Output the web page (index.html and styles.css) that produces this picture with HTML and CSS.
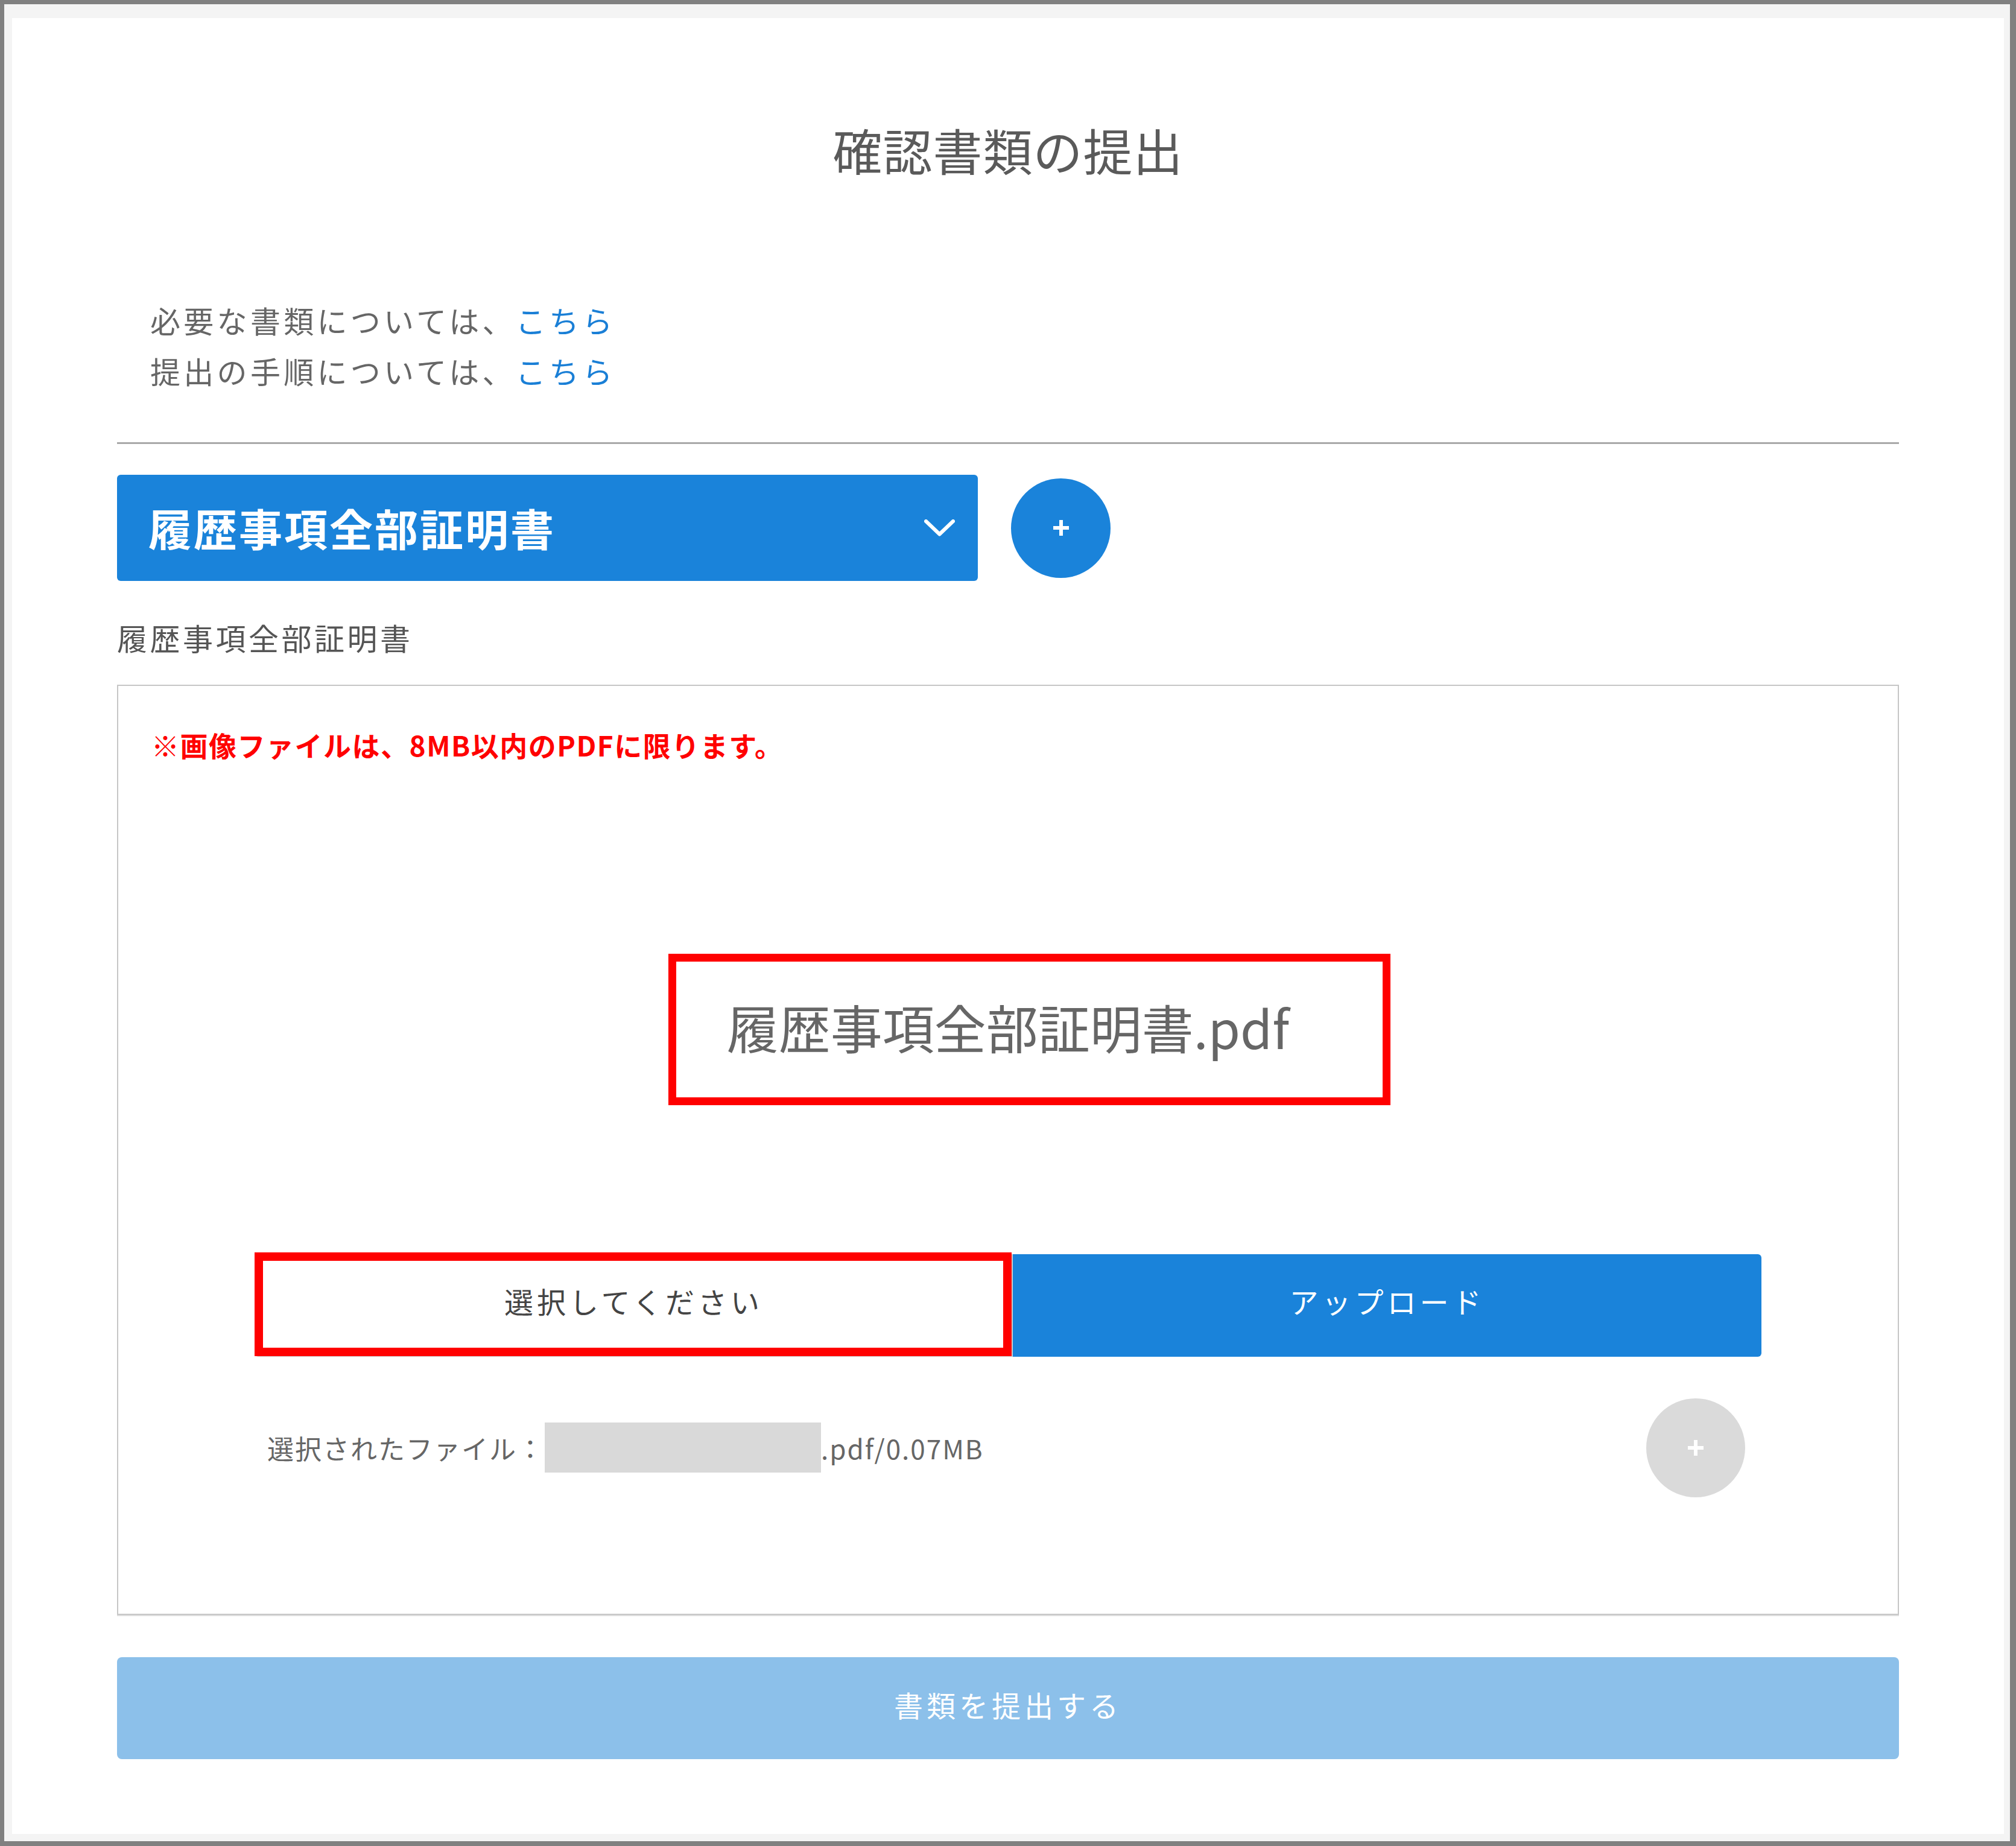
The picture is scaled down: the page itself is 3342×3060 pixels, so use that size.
FILE: index.html
```html
<!DOCTYPE html>
<html lang="ja">
<head>
    <meta charset="UTF-8">
    <meta name="viewport" content="width=device-width, initial-scale=1.0">
    <title>確認書類の提出</title>
    <link rel="stylesheet" href="styles.css">
</head>
<body>
    <div class="frame">
        <main class="page">
            <h1 class="title">確認書類の提出</h1>

            <div class="guide">
                <p>必要な書類については、<a href="#">こちら</a></p>
                <p>提出の手順については、<a href="#">こちら</a></p>
            </div>

            <hr class="divider">

            <div class="doc-row">
                <div class="doc-select">
                    <span>履歴事項全部証明書</span>
                    <svg class="chevron" width="51" height="28" viewBox="0 0 51 28">
                        <polyline points="3,3 25.5,24.5 48,3" fill="none" stroke="#fff" stroke-width="6" stroke-linecap="round" stroke-linejoin="round"/>
                    </svg>
                </div>
                <button class="add-btn" type="button">
                    <svg width="32" height="30" viewBox="0 0 32 30">
                        <path d="M16 2v26M3 15h26" stroke="#fff" stroke-width="6"/>
                    </svg>
                </button>
            </div>

            <p class="doc-label">履歴事項全部証明書</p>

            <section class="upload-box">
                <p class="note">※画像ファイルは、8MB以内のPDFに限ります。</p>

                <div class="file-name">
                    <span class="file-name-text">履歴事項全部証明書.pdf<span class="mark mark--file"></span></span>
                </div>

                <div class="actions">
                    <button class="pick" type="button">選択してください<span class="mark mark--pick"></span></button>
                    <button class="upload" type="button">アップロード</button>
                </div>

                <div class="picked">
                    <span>選択されたファイル：</span><span class="masked"></span><span>.pdf/0.07MB</span>
                    <button class="add-btn add-btn--off" type="button">
                        <svg width="32" height="30" viewBox="0 0 32 30">
                            <path d="M16 2v26M3 15h26" stroke="#fff" stroke-width="6"/>
                        </svg>
                    </button>
                </div>
            </section>

            <button class="submit" type="button">書類を提出する</button>
        </main>
    </div>
</body>
</html>
```

FILE: styles.css
```css
* {
    box-sizing: border-box;
}
body {
    margin: 0;
    font-family: "Noto Sans CJK JP", "Noto Sans", sans-serif;
    color: #555;
}
.frame {
    width: 3342px;
    height: 3060px;
    border-style: solid;
    border-color: #808080;
    border-width: 7px 10px 8px 7px;
    padding: 23px 10px 12px 13px;
    background: #f4f4f4;
}
.page {
    height: 100%;
    background: #fff;
    padding: 156px 174px 0;
}
.title {
    margin: 0;
    font-size: 82px;
    font-weight: 400;
    line-height: 123px;
    letter-spacing: 1px;
    text-align: center;
    color: #5a5a5a;
}
.guide {
    margin-top: 179px;
    padding-left: 55px;
    font-size: 50px;
    line-height: 84px;
    letter-spacing: 5.3px;
    color: #666;
}
.guide p {
    margin: 0;
}
.guide a {
    color: #1a7fd6;
    text-decoration: none;
}
.divider {
    margin: 77px 0 0;
    border: 0;
    height: 3px;
    background: #a9a9a9;
}
.doc-row {
    margin-top: 51px;
    display: flex;
    align-items: center;
    gap: 55px;
}
.doc-select {
    width: 1427px;
    height: 176px;
    background: #1a83da;
    border-radius: 6px;
    padding: 0 38px 4px 52px;
    display: flex;
    align-items: center;
    justify-content: space-between;
    color: #fff;
    font-size: 72px;
    font-weight: 700;
    letter-spacing: 3px;
}
.chevron {
    margin-top: 4px;
}
.add-btn {
    width: 165px;
    height: 165px;
    border: none;
    border-radius: 50%;
    background: #1a83da;
    display: flex;
    align-items: center;
    justify-content: center;
    padding: 0;
    flex-shrink: 0;
}
.add-btn--off {
    width: 164px;
    height: 164px;
    margin-left: auto;
    background: #dadada;
}
.doc-label {
    margin: 51px 0 0;
    font-size: 50px;
    line-height: 84px;
    letter-spacing: 4.5px;
    color: #555;
}
.upload-box {
    margin-top: 37px;
    border: 2px solid #c6c6c6;
    box-shadow: 0 2px 0 #dedede;
    padding: 62px 0 193px;
}
.note {
    margin: 0 0 0 55px;
    font-size: 46px;
    font-weight: 700;
    line-height: 70px;
    letter-spacing: 1.5px;
    color: #ff0000;
}
.file-name {
    margin-top: 368px;
    text-align: center;
    font-size: 86px;
    line-height: 130px;
    color: #666;
}
.file-name-text {
    position: relative;
    display: inline-block;
}
.mark {
    position: absolute;
    border: 14px solid #ff0000;
    pointer-events: none;
}
.mark--file {
    top: -56px;
    bottom: -65px;
    left: -97px;
    right: -168px;
    border-width: 13px;
}
.mark--pick {
    top: -5px;
    bottom: -1px;
    left: -2px;
    right: 0;
}
.actions {
    margin-top: 312px;
    display: grid;
    grid-template-columns: 1257px 1241px;
    justify-content: center;
    height: 170px;
}
.pick,
.upload {
    font-family: inherit;
    font-size: 48px;
    letter-spacing: 6px;
    border: none;
    padding: 0 0 16px;
}
.pick {
    position: relative;
    background: #fff;
    color: #444;
    border: 2px solid #ccc;
    border-radius: 6px 0 0 6px;
}
.upload {
    background: #1a83da;
    color: #fff;
    border-radius: 0 6px 6px 0;
}
.picked {
    width: 2498px;
    height: 165px;
    margin: 68px auto 0;
    padding: 0 27px 0 21px;
    display: flex;
    align-items: center;
    font-size: 44px;
    letter-spacing: 2px;
    color: #666;
}
.masked {
    display: inline-block;
    width: 458px;
    height: 83px;
    background: #d9d9d9;
}
.submit {
    display: block;
    width: 100%;
    height: 169px;
    margin-top: 70px;
    border: none;
    border-radius: 8px;
    background: #8cc0ea;
    color: #fff;
    font-family: inherit;
    font-size: 48px;
    letter-spacing: 6px;
    padding: 0 0 14px;
}
```
